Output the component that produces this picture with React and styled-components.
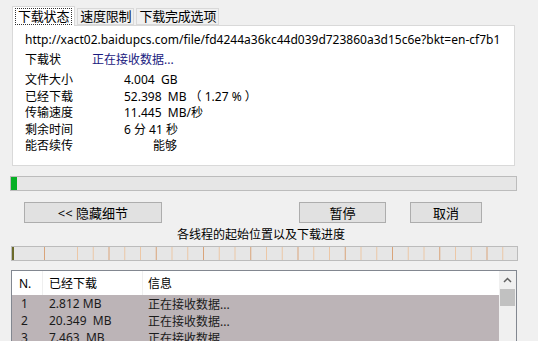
import React from 'react';
import styled, { createGlobalStyle } from 'styled-components';

const GlobalStyle = createGlobalStyle`
  html, body {
    margin: 0;
    padding: 0;
    background: #f0f0f0;
  }
  body {
    font-family: 'Noto Sans', 'Noto Sans CJK SC', sans-serif;
    font-size: 12px;
    color: #000;
  }
`;

const details = [
  { label: '文件大小', value: '4.004  GB' },
  { label: '已经下载', value: '52.398  MB （ 1.27 % ）' },
  { label: '传输速度', value: '11.445  MB/秒' },
  { label: '剩余时间', value: '6 分 41 秒' },
  { label: '能否续传', value: '能够', indent: 29 },
];

const threads = [
  { n: 1, done: '2.812 MB', info: '正在接收数据...' },
  { n: 2, done: '20.349  MB', info: '正在接收数据...' },
  { n: 3, done: '7.463  MB', info: '正在接收数据...' },
];

// divider positions of the thread segments, relative to bar left edge
const segmentLines = [32, ...Array.from({ length: 28 }, (_, i) => 65 + i * 15.75)];

function App() {
  return (
    <Window>
      <GlobalStyle />
      <TabBar>
        <Tab active>
          <FocusRing>下载状态</FocusRing>
        </Tab>
        <Tab>速度限制</Tab>
        <Tab>下载完成选项</Tab>
      </TabBar>

      <Panel>
        <Url>http://xact02.baidupcs.com/file/fd4244a36kc44d039d723860a3d15c6e?bkt=en-cf7b1</Url>
        <StatusRow>
          <StatusLabel>下载状</StatusLabel>
          <StatusValue>正在接收数据...</StatusValue>
        </StatusRow>
        <DetailList>
          {details.map((d) => (
            <DetailRow key={d.label}>
              <DetailLabel>{d.label}</DetailLabel>
              <DetailValue indent={d.indent}>{d.value}</DetailValue>
            </DetailRow>
          ))}
        </DetailList>
      </Panel>

      <ProgressBar>
        <ProgressFill style={{ width: '1.27%' }} />
      </ProgressBar>

      <ButtonRow>
        <Button width={138}>{'<< 隐藏细节'}</Button>
        <Spacer />
        <Button width={87}>暂停</Button>
        <Button width={72} gap={24}>取消</Button>
      </ButtonRow>

      <Caption>各线程的起始位置以及下载进度</Caption>

      <ThreadBar>
        <svg width="505" height="13" viewBox="0 0 505 13">
          <rect x="0" y="0" width="2" height="13" fill="#6b6a2a" />
          {segmentLines.map((x, i) => (
            <rect key={i} x={x} y="0" width="1" height="13" fill={i % 3 === 0 ? '#d9a47a' : '#ecc7a6'} />
          ))}
        </svg>
      </ThreadBar>

      <ListBox>
        <ListHeader>
          <ColN>N.</ColN>
          <ColDone divider>已经下载</ColDone>
          <ColInfo divider>信息</ColInfo>
        </ListHeader>
        {threads.map((t) => (
          <ListRow key={t.n}>
            <ColN center>{t.n}</ColN>
            <ColDone>{t.done}</ColDone>
            <ColInfo>{t.info}</ColInfo>
          </ListRow>
        ))}
        <ScrollBar>
          <ScrollArrow>
            <svg width="9" height="6" viewBox="0 0 9 6">
              <path d="M1 5 L4.5 1.5 L8 5" fill="none" stroke="#606060" strokeWidth="1.5" />
            </svg>
          </ScrollArrow>
          <ScrollThumb />
        </ScrollBar>
      </ListBox>
    </Window>
  );
}

export default App;

const Window = styled.div`
  width: 538px;
  height: 341px;
  overflow: hidden;
  padding-top: 5px;
  box-sizing: border-box;
`;

const TabBar = styled.div`
  display: flex;
  align-items: flex-end;
  height: 20px;
  margin-left: 12px;
  gap: 2px;
`;

const Tab = styled.div`
  height: ${({ active }) => (active ? '20px' : '17px')};
  box-sizing: border-box;
  display: flex;
  align-items: center;
  padding: 0 2px;
  background: ${({ active }) => (active ? '#fff' : '#f0f0f0')};
  border: 1px solid #d9d9d9;
  border-bottom: ${({ active }) => (active ? 'none' : '1px solid #d9d9d9')};
  margin-bottom: ${({ active }) => (active ? '-1px' : '0')};
  position: relative;
  z-index: ${({ active }) => (active ? 1 : 0)};
  font-size: 13px;
  letter-spacing: -0.2px;
  line-height: 15px;
`;

const FocusRing = styled.span`
  border: 1px dotted #333;
  padding: 0 2px;
  line-height: 15px;
`;

const Panel = styled.div`
  margin-left: 12px;
  width: 503px;
  height: 141px;
  box-sizing: border-box;
  background: #fff;
  border: 1px solid #d9d9d9;
  padding: 6px 0 0 12px;
`;

const Url = styled.div`
  height: 16px;
  line-height: 16px;
  white-space: nowrap;
`;

const StatusRow = styled.div`
  display: flex;
  margin-top: 4px;
  height: 16px;
  line-height: 16px;
`;

const StatusLabel = styled.div`
  width: 67px;
`;

const StatusValue = styled.div`
  color: #1a1a80;
`;

const DetailList = styled.div`
  margin-top: 4px;
  display: flex;
  flex-direction: column;
`;

const DetailRow = styled.div`
  display: flex;
  height: 16.5px;
  line-height: 16.5px;
`;

const DetailLabel = styled.div`
  width: 99px;
`;

const DetailValue = styled.div`
  white-space: pre;
  padding-left: ${({ indent }) => (indent ? `${indent}px` : '0')};
`;

const ProgressBar = styled.div`
  margin: 10px 0 0 10px;
  width: 507px;
  height: 15px;
  box-sizing: border-box;
  background: #e6e6e6;
  border: 1px solid #bcbcbc;
`;

const ProgressFill = styled.div`
  height: 100%;
  min-width: 5px;
  background: #06b025;
`;

const ButtonRow = styled.div`
  display: flex;
  margin: 11px 0 0 24px;
  width: 458px;
`;

const Spacer = styled.div`
  flex: 1;
`;

const Button = styled.div`
  width: ${({ width }) => width}px;
  margin-left: ${({ gap }) => (gap ? `${gap}px` : '0')};
  height: 21px;
  box-sizing: border-box;
  background: #e1e1e1;
  border: 1px solid #adadad;
  display: flex;
  align-items: center;
  justify-content: center;
  font-size: 13px;
`;

const Caption = styled.div`
  margin-top: 3px;
  width: 522px;
  text-align: center;
  line-height: 17px;
  font-size: 12px;
`;

const ThreadBar = styled.div`
  margin: 3px 0 0 11px;
  width: 507px;
  height: 15px;
  box-sizing: border-box;
  background: #e6e6e6;
  border: 1px solid #bcbcbc;
  display: flex;
  svg {
    display: block;
  }
`;

const ListBox = styled.div`
  position: relative;
  margin: 9px 0 0 11px;
  width: 506px;
  height: 80px;
  box-sizing: border-box;
  border: 1px solid #828790;
  border-bottom: none;
  background: #fff;
  padding-right: 17px;
`;

const ListHeader = styled.div`
  display: flex;
  height: 24px;
  align-items: center;
  background: #fff;
  font-size: 12px;
`;

const ListRow = styled.div`
  display: flex;
  height: 17px;
  align-items: center;
  background: #bcb4b7;
  color: #1a1a1a;
`;

const ColN = styled.div`
  width: 30px;
  box-sizing: border-box;
  padding-left: ${({ center }) => (center ? '9px' : '7px')};
  height: 100%;
  display: flex;
  align-items: center;
`;

const ColDone = styled.div`
  width: 100px;
  box-sizing: border-box;
  padding-left: 6px;
  height: 100%;
  display: flex;
  align-items: center;
  white-space: pre;
  border-left: 1px solid ${({ divider }) => (divider ? '#efefef' : 'transparent')};
`;

const ColInfo = styled.div`
  flex: 1;
  box-sizing: border-box;
  padding-left: 5px;
  height: 100%;
  display: flex;
  align-items: center;
  border-left: 1px solid ${({ divider }) => (divider ? '#efefef' : 'transparent')};
`;

const ScrollBar = styled.div`
  position: absolute;
  top: 0;
  right: 0;
  width: 17px;
  height: 100%;
  background: #f0f0f0;
  display: flex;
  flex-direction: column;
  align-items: center;
`;

const ScrollArrow = styled.div`
  height: 18px;
  display: flex;
  align-items: center;
  justify-content: center;
`;

const ScrollThumb = styled.div`
  width: 15px;
  height: 17px;
  background: #c1c1c1;
`;
